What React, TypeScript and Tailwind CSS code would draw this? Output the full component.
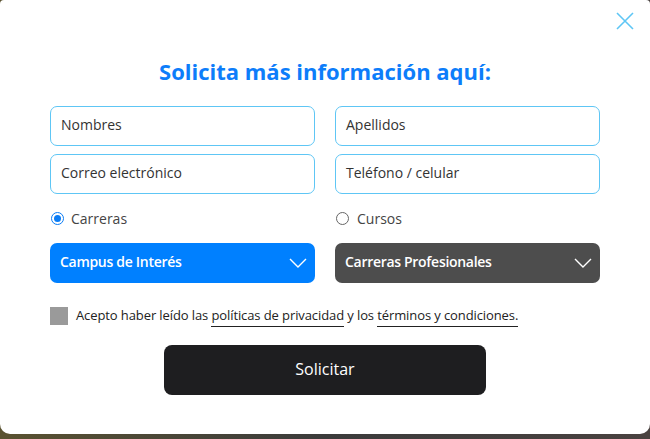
import React from "react";

const Chevron = () => (
  <svg width="18" height="10" viewBox="0 0 18 10" fill="none">
    <path d="M1 1l8 8 8-8" stroke="white" strokeWidth="1.4" />
  </svg>
);

export default function App() {
  const font = { fontFamily: "'Open Sans', Lato, sans-serif" };
  return (
    <div
      className="w-[650px] h-[439px] bg-gradient-to-r from-[#5a5230] via-[#3b3b3b] to-[#4a4240]"
      style={font}
    >
      <div className="relative h-[434px] bg-white rounded-t-[4px] rounded-b-[10px] px-[50px] pt-[56px]">
        <button className="absolute right-[16px] top-[12px] w-[18px] h-[18px]">
          <svg width="18" height="18" viewBox="0 0 18 18" fill="none">
            <path d="M1 1l16 16M17 1L1 17" stroke="#5ec6f5" strokeWidth="1.6" />
          </svg>
        </button>
        <h2 className="text-center text-[22px] leading-[30px] font-bold text-[#0d7dfa]">
          Solicita más información aquí:
        </h2>
        <div className="mt-[20px] grid grid-cols-2 gap-x-[20px] gap-y-[8px]">
          {["Nombres", "Apellidos", "Correo electrónico", "Teléfono / celular"].map((t) => (
            <div
              key={t}
              className="h-[40px] border border-[#5ec6f5] rounded-[7px] px-[10px] pb-[3px] flex items-center text-[14px] text-[#333]"
            >
              {t}
            </div>
          ))}
        </div>
        <div className="mt-[14px] grid grid-cols-2 gap-x-[20px]">
          <label className="flex items-center gap-[7px] h-[20px] pl-[1px] text-[14px] text-[#444]">
            <span className="w-[13px] h-[13px] rounded-full border border-[#0a7cf5] flex items-center justify-center">
              <span className="w-[7px] h-[7px] rounded-full bg-[#0a7cf5]" />
            </span>
            Carreras
          </label>
          <label className="flex items-center gap-[8px] h-[20px] pl-[1px] text-[14px] text-[#444]">
            <span className="w-[13px] h-[13px] rounded-full border border-[#666]" />
            Cursos
          </label>
        </div>
        <div className="mt-[15px] grid grid-cols-2 gap-x-[20px]">
          <div className="h-[40px] rounded-[7px] bg-[#0080ff] flex items-center justify-between pl-[10px] pr-[8px] text-white text-[14px] font-semibold tracking-[-0.3px]">
            <span className="pb-[3px]">Campus de Interés</span>
            <Chevron />
          </div>
          <div className="h-[40px] rounded-[7px] bg-[#4d4d4d] flex items-center justify-between pl-[10px] pr-[8px] text-white text-[14px] font-semibold tracking-[-0.3px]">
            <span className="pb-[3px]">Carreras Profesionales</span>
            <Chevron />
          </div>
        </div>
        <div className="mt-[23px] flex items-center gap-[8px] text-[13px] text-[#222] tracking-[-0.1px]">
          <span className="w-[18px] h-[18px] bg-[#9a9a9a]" />
          <span>
            Acepto haber leído las{" "}
            <span className="border-b border-[#222] pb-[2px]">políticas de privacidad</span> y los{" "}
            <span className="border-b border-[#222] pb-[2px]">términos y condiciones.</span>
          </span>
        </div>
        <div className="mt-[19px] flex justify-center">
          <button className="w-[322px] h-[50px] rounded-[8px] bg-[#1e1e20] text-white text-[16px] pb-[2px]">
            Solicitar
          </button>
        </div>
      </div>
    </div>
  );
}
